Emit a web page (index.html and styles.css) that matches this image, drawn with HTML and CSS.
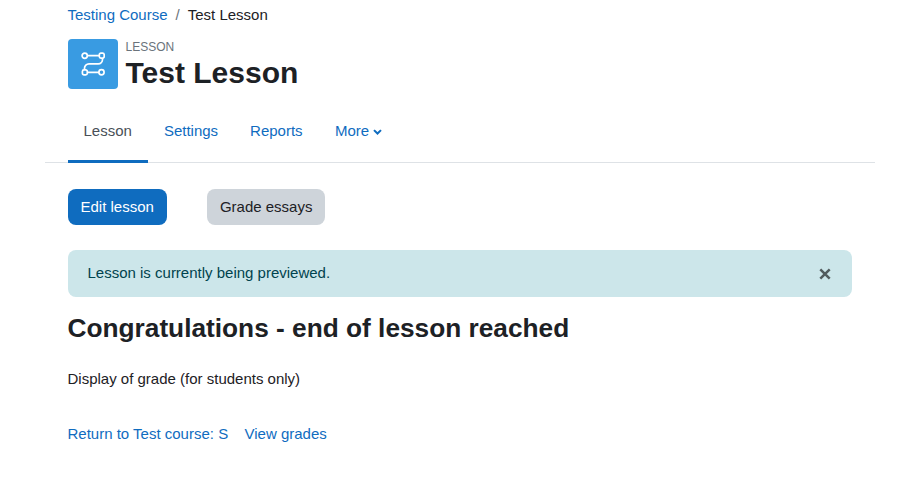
FILE: index.html
```html
<!DOCTYPE html>
<html lang="en">
<head>
<meta charset="utf-8">
<title>Test Lesson</title>
<link rel="stylesheet" href="styles.css">
</head>
<body>
<main class="page">
  <nav class="breadcrumb"><a href="#">Testing Course</a><span class="sep">/</span><span>Test Lesson</span></nav>
  <header class="header">
    <div class="activity-icon">
      <svg width="24" height="24" viewBox="0 0 24 24" fill="none" stroke="#fff" stroke-width="1.700">
        <circle cx="3.700" cy="3.700" r="2.600"/><rect x="18.300" y="1.200" width="4.900" height="4.900" rx="1.600"/>
        <rect x="1.400" y="17.900" width="4.900" height="4.900" rx="1.600"/><circle cx="20.500" cy="20.300" r="2.600"/>
        <path d="M6.200 3.700H18.300M21.500 6V7.500A4.300 4.300 0 0 1 17.200 11.800H8A4.500 4.500 0 0 0 3.500 16.300V18M6.300 20.300H18"/>
      </svg>
    </div>
    <div class="heading"><div class="kind">LESSON</div><h1>Test Lesson</h1></div>
  </header>
  <nav class="tabs">
    <a class="tab active" href="#">Lesson</a><a class="tab" href="#">Settings</a><a class="tab" href="#">Reports</a><a class="tab more" href="#">More<svg class="chevron" width="9" height="6" viewBox="0 0 9 6"><path d="M1 1.100L4.500 4.500L8 1.100" fill="none" stroke="currentColor" stroke-width="2"/></svg></a>
  </nav>
  <div class="actions"><button class="btn primary">Edit lesson</button><button class="btn secondary">Grade essays</button></div>
  <div class="alert"><span class="message">Lesson is currently being previewed.</span><button class="close" aria-label="Close"><svg width="12" height="12" viewBox="0 0 12 12"><path d="M1.300 1.300L10.700 10.700M10.700 1.300L1.300 10.700" stroke="currentColor" stroke-width="2.500"/></svg></button></div>
  <h2>Congratulations - end of lesson reached</h2>
  <p class="grade">Display of grade (for students only)</p>
  <div class="links"><a href="#">Return to Test course: S</a><a href="#">View grades</a></div>
</main>
</body>
</html>
```
FILE: styles.css
```css
* { box-sizing: border-box; }
body { margin: 0; background: #fff; color: #1d2125; font: 15px/22px "Liberation Sans", Arial, sans-serif; }
a { color: #0f6cbf; text-decoration: none; }
h1, h2, p { margin: 0; }
.page { padding: 4px 49px 0 67.500px; }
.breadcrumb { display: flex; height: 22px; }
.sep { margin: 0 8px; color: #6a737b; }
.header { display: flex; height: 50px; margin-top: 13px; }
.activity-icon { display: flex; align-items: center; justify-content: center; width: 50px; height: 50px; margin-right: 8px; border-radius: 4px; background: #399be2; }
.kind { height: 17px; font-size: 12px; line-height: 17px; color: #6a737b; }
h1 { font-size: 30px; line-height: 34px; }
.tabs { display: flex; height: 64px; margin: 10px -23px 0 -22.500px; padding-left: 22.500px; border-bottom: 1px solid #dee2e6; }
.tab { display: flex; align-items: center; padding: 3px 16px 0; border-bottom: 3px solid transparent; margin-bottom: -1px; }
.tab.active { color: #495057; border-color: #0f6cbf; }
.more { padding-left: 16.300px; }
.chevron { margin: 2px 0 0 3.500px; }
.actions { display: flex; gap: 40px; margin-top: 26px; }
.btn { height: 36px; padding: 0 13px; border: 0; border-radius: 8px; font: inherit; }
.primary { color: #fff; background: #0f6cbf; }
.secondary { color: #1d2125; background: #ced4da; }
.alert { display: flex; justify-content: space-between; align-items: center; height: 47px; margin-top: 25px; padding: 0 21px 0 20px; border-radius: 8px; color: #00434e; background: #cce6ea; }
.message { padding-bottom: 2px; }
.close { display: flex; padding: 0; border: 0; background: none; color: #525c5e; }
h2 { margin-top: 14px; font-size: 26.250px; line-height: 34px; }
.grade { margin-top: 23px; }
.links { display: flex; gap: 16.400px; margin-top: 33px; }
```
